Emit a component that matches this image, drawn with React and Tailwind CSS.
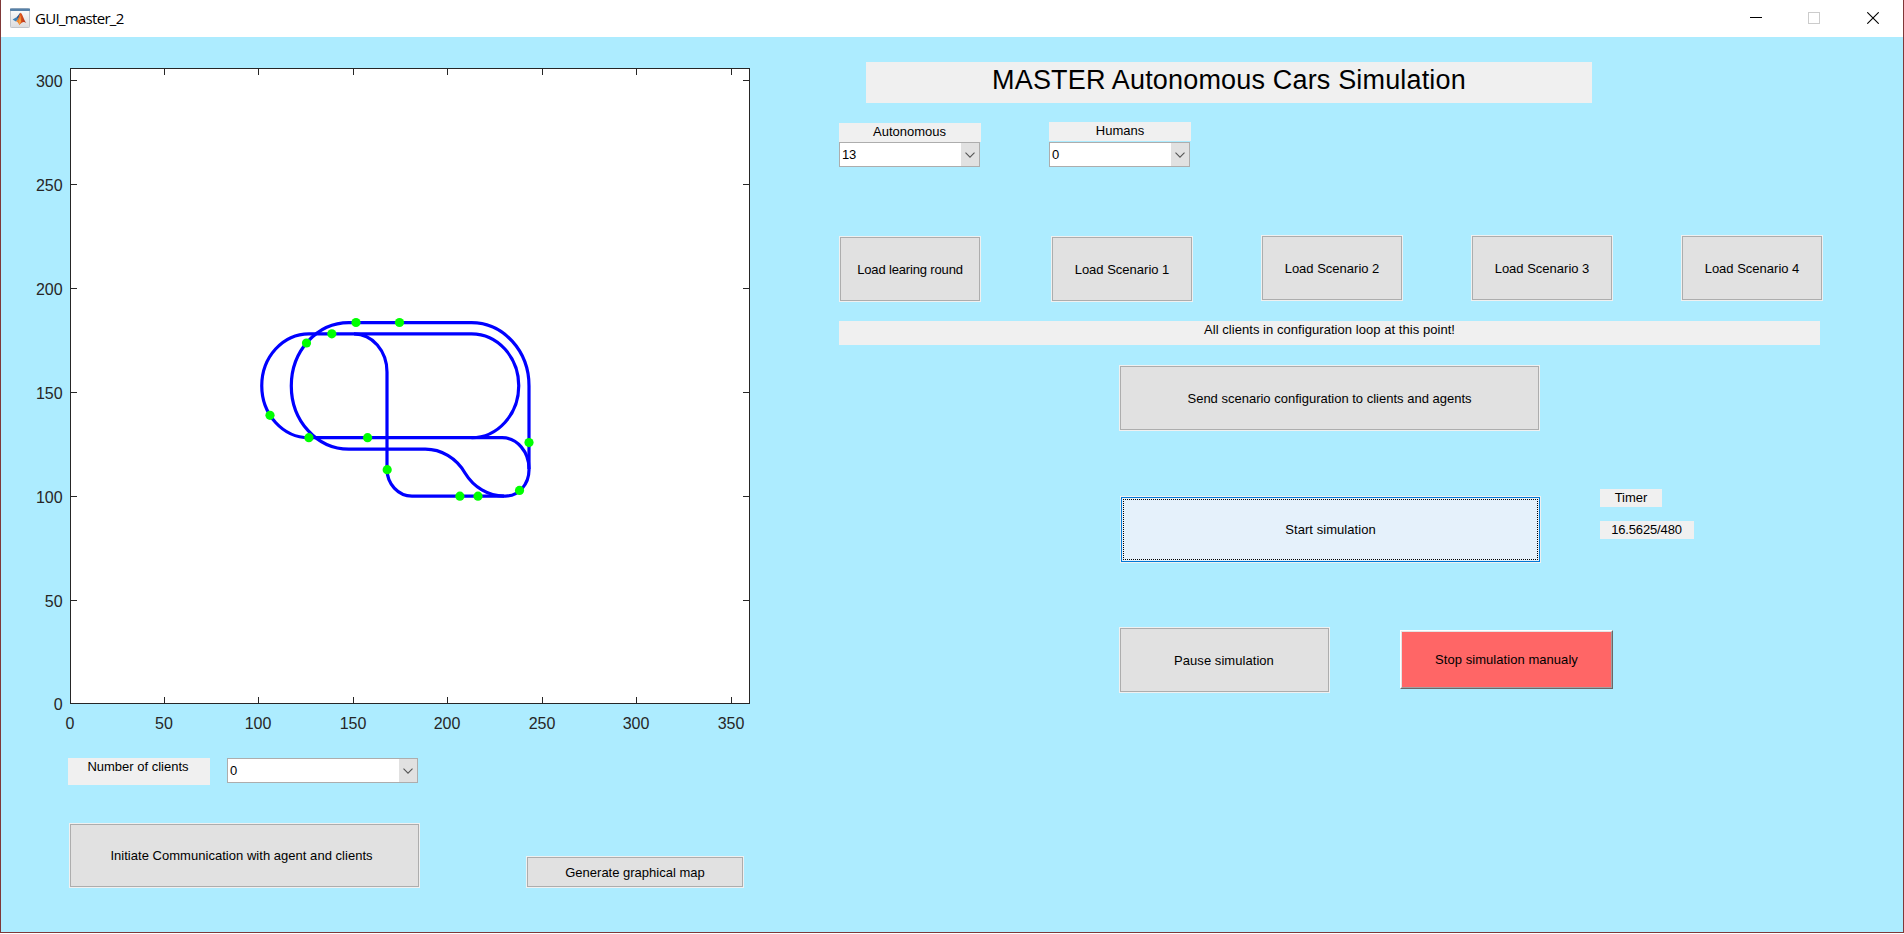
const X_TICKS = [[70, "0"], [164, "50"], [258, "100"], [353, "150"], [447, "200"], [542, "250"], [636, "300"], [731, "350"]];
const Y_TICKS = [[703, "0"], [600, "50"], [496, "100"], [392, "150"], [288, "200"], [184, "250"], [80, "300"]];

const ROADS = [
  "M309 333.8 A47.2 51.9 0 0 0 309 437.7 H502 A27 31 0 0 1 529 469",
  "M309 333.8 H471.5 A47.2 51.9 0 0 1 471.5 437.7",
  "M425 449.2 H348.8 A57.5 63.3 0 0 1 348.8 322.6 H471.5 A57.5 63.3 0 0 1 529 386 V470 A23.6 26 0 0 1 505.4 496.1 H412 A25 27 0 0 1 387 469 V372 A33 38.2 0 0 0 354 333.8",
  "M425 449.2 A47.2 52 0 0 1 465 473 A47.2 52 0 0 0 504 496.1",
];

const CARS = [
  [356, 322.5], [399.5, 322.5], [331.8, 333.8], [306.5, 343], [270, 415.3], [308.9, 437.7],
  [367.6, 437.7], [387.2, 469.7], [459.9, 496.2], [478, 496.2], [519.5, 490.4], [529, 442.6],
];

function Plot() {
  return (
    <svg className="block h-[703px] w-[780px]" viewBox="1 37 780 703" fontFamily="'Liberation Sans', Arial, sans-serif" fontSize="16">
      <rect x="70.5" y="68.5" width="679" height="635" fill="#fff" stroke="#262626" shapeRendering="crispEdges" />
      <g fill="#262626" shapeRendering="crispEdges">
        {X_TICKS.slice(1).map(([x]) => (
          <g key={x}>
            <rect x={x} y="68" width="1" height="7" />
            <rect x={x} y="697" width="1" height="7" />
          </g>
        ))}
        {Y_TICKS.slice(1).map(([y]) => (
          <g key={y}>
            <rect x="70" y={y} width="7" height="1" />
            <rect x="743" y={y} width="7" height="1" />
          </g>
        ))}
      </g>
      <g fill="#262626">
        {X_TICKS.map(([x, t]) => (
          <text key={t} x={x} y="729" textAnchor="middle">{t}</text>
        ))}
        {Y_TICKS.map(([y, t]) => (
          <text key={t} x="62.6" y={y + 7.3} textAnchor="end">{t}</text>
        ))}
      </g>
      <g fill="none" stroke="#0000ff" strokeWidth="3.2">
        {ROADS.map((d) => <path key={d} d={d} />)}
      </g>
      <g fill="#00ff00">
        {CARS.map(([x, y]) => <circle key={x} cx={x} cy={y} r="4.6" />)}
      </g>
    </svg>
  );
}

function Button({ className, children }) {
  return (
    <button className={`flex shrink-0 border border-[#f0f0f0] ${className}`}>
      <span className="flex h-full w-full items-center justify-center border border-[#adadad] bg-[#e1e1e1]">{children}</span>
    </button>
  );
}

function Label({ className, children }) {
  return <div className={`shrink-0 bg-[#f0f0f0] text-center ${className}`}>{children}</div>;
}

function Combo({ className, value }) {
  return (
    <div className={`flex h-[25px] shrink-0 border border-[#adadad] bg-white ${className}`}>
      <span className="flex-1 pt-[4px] pl-[2px] tracking-[-0.3px]">{value}</span>
      <span className="flex w-[18px] items-center justify-center bg-[#e1e1e1] pr-[1px]">
        <svg className="h-[6px] w-[10px]" viewBox="0 0 10 6" fill="none" stroke="#555">
          <path d="M0.5 0.7 L5 5.2 L9.5 0.7" strokeWidth="1.1" />
        </svg>
      </span>
    </div>
  );
}

function MatlabIcon() {
  return (
    <svg className="h-5 w-5" viewBox="0 0 20 20">
      <defs>
        <linearGradient id="frame" x1="0" y1="0" x2="0" y2="1">
          <stop offset="0" stopColor="#fdfdfd" />
          <stop offset="1" stopColor="#dcdcde" />
        </linearGradient>
        <linearGradient id="peak" x1="0" y1="0" x2="1" y2="0">
          <stop offset="0" stopColor="#f3a34a" />
          <stop offset="0.45" stopColor="#e0561c" />
          <stop offset="1" stopColor="#a8281a" />
        </linearGradient>
      </defs>
      <rect x="0.5" y="0.5" width="19" height="19" rx="0.8" fill="url(#frame)" stroke="#c0c4ca" />
      <rect x="0" y="0.5" width="20" height="2.4" rx="0.6" fill="#5580a8" />
      <path d="M2.6 11.4 L6.4 9.2 L8.3 11.2 L5.8 13.6 Z" fill="#3d7fb6" />
      <path d="M6.4 9.2 C8 8.6 9 5.2 10.6 4.8 L8.3 11.4 Z" fill="#2b5587" />
      <path d="M10.6 4.8 C12.3 5.4 13.6 11.3 16.2 15 C14 13.2 12.2 13.6 9.3 17 C8.4 14.7 7.6 13.8 5.8 13.6 C8.6 12.3 9 6.5 10.6 4.8 Z" fill="url(#peak)" />
      <path d="M8.4 13 C9.2 11.8 9.8 9.5 10.4 7.5 L11 13.8 L9.3 17 Z" fill="#f7a53f" />
    </svg>
  );
}

function TitleBar() {
  return (
    <header className="flex h-[37px] shrink-0 justify-between bg-white">
      <div className="flex pt-2 pl-[9px]">
        <MatlabIcon />
        <span className="pl-[5px] pt-[3px] font-['Open_Sans',sans-serif] text-[15px] leading-[15px] tracking-[-0.7px]">GUI_master_2</span>
      </div>
      <div className="flex gap-[46px] pt-3 pr-[24px]">
        <svg className="h-3 w-3" viewBox="0 0 12 12"><rect y="5" width="12" height="1" /></svg>
        <svg className="h-3 w-3" viewBox="0 0 12 12"><rect x="0.5" y="0.5" width="11" height="11" fill="none" stroke="#ccc" /></svg>
        <svg className="ml-[1px] h-3 w-3" viewBox="0 0 12 12" stroke="#000" strokeWidth="1.1"><path d="M0.3 0.3 L11.7 11.7 M11.7 0.3 L0.3 11.7" /></svg>
      </div>
    </header>
  );
}

export default function App() {
  return (
    <div className="flex h-[934px] w-[1904px] flex-col overflow-hidden bg-white font-['Liberation_Sans',Arial,sans-serif] text-[13px] leading-[15px] text-black">
      <div className="flex h-[933px] flex-col border-x border-b border-[#7f3838]">
        <TitleBar />
        <main className="flex flex-1 bg-[#adecff]">
          <section className="flex w-[838px] shrink-0 flex-col">
            <Plot />
            <div className="mt-[18px] ml-[67px] flex items-start gap-[17px]">
              <Label className="h-[27px] w-[142px] pt-[1px] pr-[2px]">Number of clients</Label>
              <Combo className="w-[191px]" value="0" />
            </div>
            <div className="mt-[38px] ml-[68px] flex items-end gap-[106px]">
              <Button className="h-[65px] w-[351px] tracking-[0.03px]">
                <span className="pr-[6px]">Initiate Communication with agent and clients</span>
              </Button>
              <Button className="h-[32px] w-[218px]">Generate graphical map</Button>
            </div>
          </section>

          <section className="flex flex-col items-start">
            <h1 className="mt-[25px] ml-[27px] h-[41px] w-[726px] bg-[#f0f0f0] pt-[3px] text-center text-[27px] leading-[31px] tracking-[0.17px]">
              MASTER Autonomous Cars Simulation
            </h1>

            <div className="mt-[19px] flex h-[45px] items-start gap-[68px]">
              <div className="flex flex-col pt-[1px]">
                <Label className="h-[19px] w-[142px] pt-[1px] pr-[1px]">Autonomous</Label>
                <Combo className="w-[141px]" value="13" />
              </div>
              <div className="flex flex-col gap-[1px]">
                <Label className="h-[19px] w-[142px] pt-[1px]">Humans</Label>
                <Combo className="w-[141px]" value="0" />
              </div>
            </div>

            <div className="mt-[68px] flex h-[67px] items-start gap-[68px]">
              <Button className="mt-[1px] mr-[2px] h-[66px] w-[142px] tracking-[-0.15px]">Load learing round</Button>
              <Button className="mt-[1px] h-[66px] w-[142px]">Load Scenario 1</Button>
              <Button className="h-[66px] w-[142px]">Load Scenario 2</Button>
              <Button className="h-[66px] w-[142px]">Load Scenario 3</Button>
              <Button className="h-[66px] w-[142px]">Load Scenario 4</Button>
            </div>

            <Label className="mt-[19px] h-[24px] w-[981px] pt-[1px] tracking-[0.05px]">All clients in configuration loop at this point!</Label>

            <Button className="mt-[20px] ml-[280px] h-[66px] w-[421px]">Send scenario configuration to clients and agents</Button>

            <div className="mt-[58px] ml-[281px] flex items-start gap-[59px]">
              <button className="mt-[7px] flex h-[67px] w-[421px] border border-[#f0f0f0]">
                <span className="flex h-full w-full border border-[#0078d7] bg-[#e5f1fb] p-[1px]">
                  <span className="flex h-full w-full items-center justify-center border border-dotted border-black tracking-[0.05px]">Start simulation</span>
                </span>
              </button>
              <div className="flex flex-col items-start gap-[14px]">
                <Label className="h-[18px] w-[62px] pt-[1px]">Timer</Label>
                <Label className="h-[18px] w-[94px] pt-[1px] pr-[1px] tracking-[-0.15px]">16.5625/480</Label>
              </div>
            </div>

            <div className="mt-[64px] ml-[280px] flex items-start gap-[70px]">
              <Button className="h-[66px] w-[211px] tracking-[0.05px]">
                <span className="pr-[1px]">Pause simulation</span>
              </Button>
              <button className="mt-[3px] flex h-[59px] w-[213px] border border-t-white border-r-[#696969] border-b-[#696969] border-l-white">
                <span className="flex h-full w-full items-center justify-center border border-t-[#e3e3e3] border-r-[#a0a0a0] border-b-[#a0a0a0] border-l-[#e3e3e3] bg-[#ff6666] tracking-[0.05px]">
                  Stop simulation manualy
                </span>
              </button>
            </div>
          </section>
        </main>
      </div>
    </div>
  );
}
